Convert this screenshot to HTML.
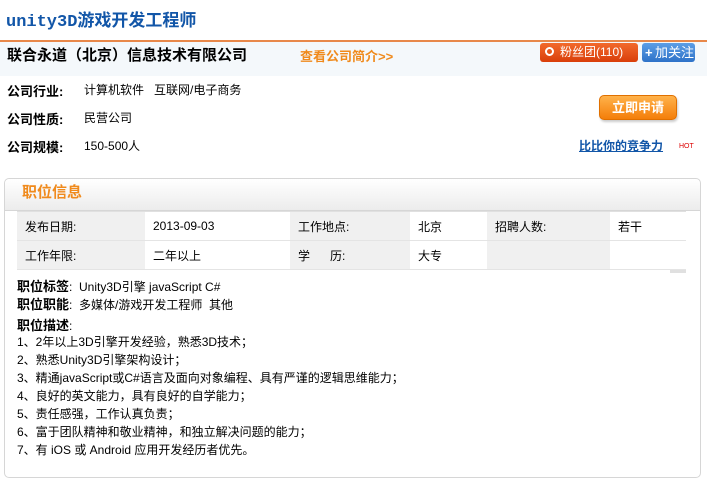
<!DOCTYPE html>
<html><head><meta charset="utf-8"><style>
*{margin:0;padding:0;box-sizing:border-box}
body{width:707px;height:468px;overflow:hidden;background:#fff;font-family:"Liberation Sans","Noto Sans CJK SC",sans-serif;font-size:12px;color:#000;position:relative}
.a{position:absolute;white-space:nowrap}
b{font-weight:bold}
td{font-size:12px;padding-left:8px;height:29px}
</style></head><body>
<div class="a" style="left:6px;top:6px;font-size:17px;font-weight:bold;color:#1256a8;font-family:'Liberation Mono','Noto Sans CJK SC',monospace">unity3D游戏开发工程师</div>
<div class="a" style="left:0;top:40px;width:707px;height:2px;background:#e8884a"></div>
<div class="a" style="left:0;top:42px;width:707px;height:34px;background:#f4f8fb"></div>
<div class="a" style="left:7px;top:44px;font-size:15px;font-weight:bold">联合永道（北京）信息技术有限公司</div>
<div class="a" style="left:300px;top:46px;font-size:13px;font-weight:bold;color:#f08a1c">查看公司简介&gt;&gt;</div>
<div class="a" style="left:540px;top:43px;width:98px;height:19px;border-radius:3px;background:linear-gradient(#f26a2c,#d93e0a);color:#fff;font-size:12px;line-height:19px;padding-left:20px">粉丝团(110)<span style="position:absolute;left:5px;top:4px;width:9px;height:9px;border:2px solid #fff;border-radius:50%"></span></div>
<div class="a" style="left:642px;top:43px;width:53px;height:19px;border-radius:3px;background:linear-gradient(#5c9ee6,#2e72c8);color:#fff;font-size:13px;line-height:19px;padding-left:13px">加关注<span style="position:absolute;left:3px;top:0;font-weight:bold">+</span></div>
<div class="a" style="left:7px;top:81px;font-weight:bold;font-size:13px">公司行业:</div><div class="a" style="left:84px;top:81px">计算机软件&nbsp;&nbsp;&nbsp;互联网/电子商务</div>
<div class="a" style="left:7px;top:109px;font-weight:bold;font-size:13px">公司性质:</div><div class="a" style="left:84px;top:109px">民营公司</div>
<div class="a" style="left:7px;top:137px;font-weight:bold;font-size:13px">公司规模:</div><div class="a" style="left:84px;top:137px">150-500人</div>
<div class="a" style="left:599px;top:95px;width:78px;height:25px;border-radius:5px;background:linear-gradient(#ffb24a,#f47e0a);border:1px solid #e07000;color:#fff;font-weight:bold;font-size:13px;text-align:center;line-height:23px;box-shadow:1px 2px 2px #ccc">立即申请</div>
<div class="a" style="left:579px;top:137px;font-weight:bold;color:#1256a8;text-decoration:underline;font-size:12px">比比你的竞争力</div>
<div class="a" style="left:679px;top:143px;font-size:7px;color:#d00">HOT</div>
<div class="a" style="left:4px;top:178px;width:697px;height:300px;border:1px solid #d6d6d6;border-radius:5px"></div>
<div class="a" style="left:5px;top:179px;width:695px;height:32px;background:linear-gradient(#fff,#ececec);border-bottom:1px solid #d6d6d6;border-radius:5px 5px 0 0"></div>
<div class="a" style="left:22px;top:181px;font-size:15px;font-weight:bold;color:#f08a1c">职位信息</div>
<table class="a" style="left:17px;top:211px;width:669px;border-collapse:collapse;border-top:1px solid #e0e0e0">
<tr style="border-bottom:1px solid #e4e4e4"><td style="width:128px;background:#f0f0f0">发布日期:</td><td style="width:145px">2013-09-03</td><td style="width:120px;background:#f0f0f0">工作地点:</td><td style="width:77px">北京</td><td style="width:123px;background:#f0f0f0">招聘人数:</td><td>若干</td></tr>
<tr style="border-bottom:1px solid #e4e4e4"><td style="background:#f0f0f0">工作年限:</td><td>二年以上</td><td style="background:#f0f0f0">学&nbsp;&nbsp;&nbsp;&nbsp;&nbsp;&nbsp;历:</td><td>大专</td><td style="background:#f0f0f0"></td><td></td></tr>
</table>
<div class="a" style="left:670px;top:270px;width:16px;height:3px;background:#e0e0e0"></div>
<div class="a" style="left:17px;top:276px"><b style="font-size:13px">职位标签</b>: &nbsp;Unity3D引擎 javaScript C#</div>
<div class="a" style="left:17px;top:294px"><b style="font-size:13px">职位职能</b>: &nbsp;多媒体/游戏开发工程师 &nbsp;其他</div>
<div class="a" style="left:17px;top:315px"><b style="font-size:13px">职位描述</b>:</div>
<div class="a" style="left:17px;top:333px;line-height:18px">1、2年以上3D引擎开发经验，熟悉3D技术；<br>2、熟悉Unity3D引擎架构设计；<br>3、精通javaScript或C#语言及面向对象编程、具有严谨的逻辑思维能力；<br>4、良好的英文能力，具有良好的自学能力；<br>5、责任感强，工作认真负责；<br>6、富于团队精神和敬业精神，和独立解决问题的能力；<br>7、有 iOS 或 Android 应用开发经历者优先。</div>
</body></html>
